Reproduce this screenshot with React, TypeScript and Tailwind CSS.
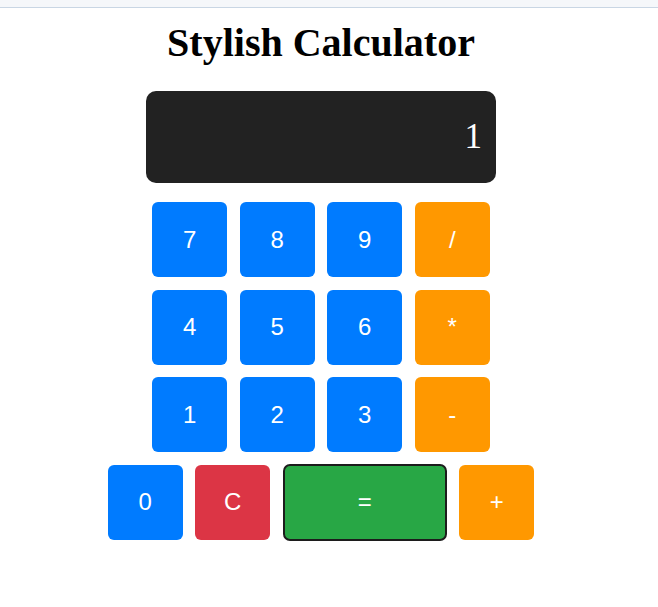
const ROWS = [
  ['7', '8', '9', '/'],
  ['4', '5', '6', '*'],
  ['1', '2', '3', '-'],
];

function Key({ label, color }: { label: string; color: string }) {
  return (
    <button className={`w-[75px] h-[75px] rounded-[6px] text-white text-[24px] flex items-center justify-center ${color}`}>
      {label}
    </button>
  );
}

export default function App() {
  const isOp = (k: string) => ['/', '*', '-', '+'].includes(k);

  return (
    <div className="min-h-[607px] bg-white" style={{ fontFamily: '"Liberation Sans", Arial, sans-serif' }}>
      <div className="h-[8px] bg-[#f5f7fa] border-b border-[#c9d6e4]" />
      <div className="w-[642px] flex flex-col items-center">
        <h1
          className="mt-[12px] text-[40px] leading-[46px] font-bold text-black"
          style={{ fontFamily: '"Liberation Serif", "Times New Roman", serif' }}
        >
          Stylish Calculator
        </h1>

        <div
          className="mt-[25px] w-[350px] h-[92px] rounded-[10px] bg-[#222222] text-white text-[35px] flex items-center justify-end pr-[14px]"
          style={{ fontFamily: '"Liberation Serif", "Times New Roman", serif' }}
        >
          1
        </div>

        <div className="mt-[19px] flex flex-col gap-[12.5px] items-center">
          {ROWS.map((row, i) => (
            <div key={i} className="flex gap-[12.5px]">
              {row.map(k => (
                <Key key={k} label={k} color={isOp(k) ? 'bg-[#ff9800]' : 'bg-[#007bff]'} />
              ))}
            </div>
          ))}
          <div className="flex gap-[12.5px] h-[75px] items-center">
            <Key label="0" color="bg-[#007bff]" />
            <Key label="C" color="bg-[#dc3545]" />
            <button className="w-[164px] h-[77px] rounded-[7px] bg-[#28a745] border-2 border-[#1c1c1c] text-white text-[24px] flex items-center justify-center">
              =
            </button>
            <Key label="+" color="bg-[#ff9800]" />
          </div>
        </div>
      </div>
    </div>
  );
}
